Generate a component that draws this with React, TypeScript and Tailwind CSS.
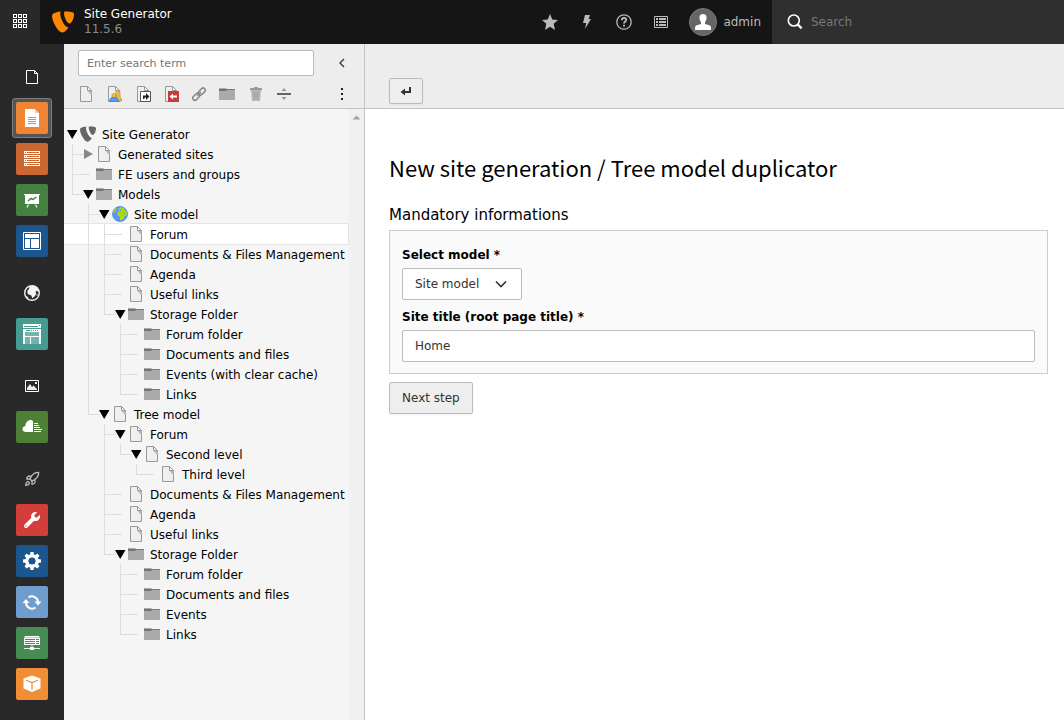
import React from "react";
import { FaWrench } from "react-icons/fa";
import { Rocket } from "lucide-react";

type Kind = "logo" | "page" | "folder" | "globe";

interface TreeNode {
  label: string;
  kind: Kind;
  open?: boolean;
  selected?: boolean;
  children?: TreeNode[];
}

const page = (label: string, extra: Partial<TreeNode> = {}): TreeNode => ({ label, kind: "page", ...extra });
const folder = (label: string, extra: Partial<TreeNode> = {}): TreeNode => ({ label, kind: "folder", ...extra });

const root: TreeNode = {
  label: "Site Generator",
  kind: "logo",
  open: true,
  children: [
    page("Generated sites", { open: false }),
    folder("FE users and groups"),
    folder("Models", {
      open: true,
      children: [
        {
          label: "Site model",
          kind: "globe",
          open: true,
          children: [
            page("Forum", { selected: true }),
            page("Documents & Files Management"),
            page("Agenda"),
            page("Useful links"),
            folder("Storage Folder", {
              open: true,
              children: [
                folder("Forum folder"),
                folder("Documents and files"),
                folder("Events (with clear cache)"),
                folder("Links"),
              ],
            }),
          ],
        },
        page("Tree model", {
          open: true,
          children: [
            page("Forum", {
              open: true,
              children: [page("Second level", { open: true, children: [page("Third level")] })],
            }),
            page("Documents & Files Management"),
            page("Agenda"),
            page("Useful links"),
            folder("Storage Folder", {
              open: true,
              children: [folder("Forum folder"), folder("Documents and files"), folder("Events"), folder("Links")],
            }),
          ],
        }),
      ],
    }),
  ],
};

function Logo({ className }: { className: string }) {
  return (
    <svg viewBox="0 0 22 22" className={className} fill="currentColor" aria-hidden="true">
      <path d="M.6 3C3 1.500 6 .9 9 .6 8.200 1.500 8.100 2.600 8.400 4.500c1 5 4.500 11.700 8.100 12-2 3-4.500 5.100-6.500 5.100C6.500 21.600.1 10.800.1 5.500.1 4.300.2 3.500.6 3z" />
      <path d="M12.500.6c4.500-.1 9.100.4 9.400 1.900.5 3-1.600 9.900-4.400 9.900-2.500 0-5.500-7-5.500-10 0-.9.100-1.500.5-1.800z" />
    </svg>
  );
}

function PageIcon({ children }: { children?: React.ReactNode }) {
  return (
    <svg viewBox="0 0 16 16" className="size-4 shrink-0" aria-hidden="true">
      <path d="M2.5.5h7l4 4v11h-11z" fill="#efefef" stroke="#999" />
      <path d="M9.5 5l4 4.5V4.5z" fill="#bbb" />
      <path d="M9.5.5v4h4z" fill="#fff" stroke="#999" />
      {children}
    </svg>
  );
}

function FolderIcon() {
  return (
    <svg viewBox="0 0 16 16" className="size-4 shrink-0" aria-hidden="true">
      <path d="M0 2h7l1 1h8v11H0z" fill="#aaa" />
      <path d="M0 3h8l8 .2V4H8L7 5H0z" fill="#737373" />
    </svg>
  );
}

function GlobeIcon() {
  return (
    <svg viewBox="0 0 16 16" className="size-4 shrink-0" aria-hidden="true">
      <circle cx="8" cy="8" r="7.500" fill="#59f" stroke="#4a84d8" strokeWidth=".8" />
      <path d="M6.500 2.500L9 1l3.500 1.400-.8 1.300 2.100.7 1.300 2.600-.8 3-2 .2-.6 2.300-2.200 2-1.300-.3-.4-3.600-2-1.200-.6-2.400 1.800-2z" fill="#b0d80e" />
      <path d="M2 4l1.500-1.600L5 2.500 3.400 5.200 2.200 7 .9 7.200z" fill="#b0d80e" />
      <path d="M7 4l2-.8.4 1.200-1.200 1zM11 6l2 1-.4 1.500z" fill="#59f" />
    </svg>
  );
}

function NodeIcon({ kind }: { kind: Kind }) {
  if (kind === "logo") return <Logo className="size-4 shrink-0 text-[#666]" />;
  if (kind === "folder") return <FolderIcon />;
  if (kind === "globe") return <GlobeIcon />;
  return <PageIcon />;
}

/** One 16px column of guide lines: `up` and `down` draw the vertical halves, `branch` turns towards the node. */
function Guide({ up, down, branch }: { up: boolean; down: boolean; branch: boolean }) {
  return (
    <span className="flex h-5 w-4 shrink-0 justify-end">
      <span className="flex w-2 flex-col">
        <span className={`h-[11px] ${up ? "border-l border-[#ddd]" : ""} ${branch ? "border-b border-b-[#ddd]" : ""}`} />
        <span className={`h-[9px] ${down ? "border-l border-[#ddd]" : ""}`} />
      </span>
    </span>
  );
}

function Toggle({ node, depth }: { node: TreeNode; depth: number }) {
  if (node.open === undefined) {
    return (
      <span className="flex h-5 w-4 shrink-0">
        <span className="h-[11px] w-[10px] border-b border-[#ddd]" />
      </span>
    );
  }
  return (
    <button type="button" aria-label={`Toggle ${node.label}`} className="flex h-5 w-4 shrink-0 items-center">
      <svg viewBox="0 0 16 20" className="h-5 w-4">
        {depth > 0 && <path d="M0 10.500h4" stroke="#ddd" />}
        {node.open ? <path d="M3 6h10.500L8.200 15z" fill="#000" /> : <path d="M4 5l9 5-9 5z" fill="#888" />}
      </svg>
    </button>
  );
}

function Branch({ node, depth, trail }: { node: TreeNode; depth: number; trail: boolean[] }) {
  return (
    <li>
      <div
        className={`flex items-center ${
          node.selected ? "relative -my-px h-[22px] border-y border-r border-[#e5e5e5] bg-white" : "h-5"
        }`}
      >
        {trail.map((more, i) => {
          const own = i === trail.length - 1;
          return <Guide key={i} up={own || more} down={more} branch={own} />;
        })}
        <Toggle node={node} depth={depth} />
        <NodeIcon kind={node.kind} />
        <a href="#" className="pt-[2px] pl-[6px] text-xs leading-4 whitespace-nowrap text-black">
          {node.label}
        </a>
      </div>
      {node.children && (
        <ul>
          {node.children.map((child, i) => (
            <Branch
              key={i}
              node={child}
              depth={depth + 1}
              trail={[...trail, i < node.children!.length - 1]}
            />
          ))}
        </ul>
      )}
    </li>
  );
}

interface Module {
  name: string;
  bg?: string;
  active?: boolean;
  art: React.ReactNode;
}

const moduleGroups: Module[][] = [
  [
    {
      name: "Web",
      art: <path d="M10.500 9.500h8l3 3v10h-11zM18.500 9.500v3h3" fill="none" stroke="#fff" />,
    },
    {
      name: "Page",
      bg: "bg-[#ef8535]",
      active: true,
      art: (
        <>
          <path d="M9 7h10v4h4v14H9z" fill="#fff" />
          <path d="M19 7l4 4h-4z" fill="#f9cba6" />
          <path d="M12 15.500h8M12 17.500h8M12 19.500h8M12 21.500h8" stroke="#ef8535" />
        </>
      ),
    },
    {
      name: "List",
      bg: "bg-[#cc6633]",
      art: (
        <>
          <path d="M8 8h16v3H8zM8 12h16v3H8zM8 16h16v3H8zM8 20h16v3H8z" fill="#fff" />
          <path d="M11 9.500h12M11 13.500h12M11 17.500h12M11 21.500h12M9 9.500h1M9 13.500h1M9 17.500h1M9 21.500h1" stroke="#cc6633" />
        </>
      ),
    },
    {
      name: "View",
      bg: "bg-[#448040]",
      art: (
        <>
          <path d="M8 10h16v1h-1v9H9v-9H8z" fill="#fff" />
          <path d="M12.500 20.500L11 23.500M19.500 20.500l1.500 3" stroke="#cfe0cd" strokeWidth="1.500" />
          <path d="M12 17l3-2.500 2 1 3.500-2.500" stroke="#448040" strokeWidth="1.500" fill="none" />
        </>
      ),
    },
    {
      name: "Layout",
      bg: "bg-[#1b568f]",
      art: (
        <>
          <path d="M7.500 7.500h17v17h-17z" fill="none" stroke="#fff" />
          <path d="M9 9h14v4H9zM9 14h5v9H9zM15 14h8v9h-8z" fill="#fff" />
        </>
      ),
    },
  ],
  [
    {
      name: "Site",
      art: (
        <>
          <circle cx="16" cy="16" r="7.300" fill="#292929" stroke="#eee" strokeWidth="1.400" />
          <path d="M13.500 9l4-.5 4 2 1.500 3.500-1 1-1-1.500-1.500 1.500.8 1.500-1.500 2.800-2.500 2-1-2.800-3.600-1.500-.4-3 1.700-2z" fill="#f4f4f4" />
          <path d="M9 18l3 2 1 3-3-1.500zM20 18l2-1-.5 2z" fill="#ddd" />
        </>
      ),
    },
    {
      name: "Template",
      bg: "bg-[#479c92]",
      art: (
        <>
          <path d="M7 6h18v4H7zM8 11h16v3H8z" fill="#fff" />
          <path d="M8 8.500h14M23 7.500h1" stroke="#479c92" />
          <path d="M10 12.500h4M15 12.500h1M17 12.500h1M19 12.500h1M21 12.500h1" stroke="#479c92" />
          <path d="M7 11h2v15H7zM23 11h2v15h-2z" fill="#fff" />
          <path d="M9 14h14v4H9zM9 19h5v7H9zM15 19h8v7h-8z" fill="#73b5ad" />
          <path d="M9 18.500h14M14.500 19v7" stroke="#fff" />
        </>
      ),
    },
  ],
  [
    {
      name: "File",
      art: (
        <>
          <path d="M9.500 10.500h13v11h-13z" fill="none" stroke="#fff" />
          <path d="M11 20v-2l3-4 2 3 1.500-1.500L21 19v1zM19 12h2v2h-2z" fill="#eee" />
        </>
      ),
    },
    {
      name: "Filelist",
      bg: "bg-[#4d7f37]",
      art: (
        <>
          <path d="M17 21H9.500C5.500 20.500 5.500 15.500 9.400 15c0-6 7-7.500 7.600-4.500z" fill="#fff" />
          <path d="M18 12.500h4M18 14.500h5M18 16.500h6M18 18.500h8M18 20.500h7" stroke="#fff" />
        </>
      ),
    },
  ],
  [
    { name: "Admin Tools", art: null },
    { name: "Maintenance", bg: "bg-[#d23f3a]", art: null },
    {
      name: "Settings",
      bg: "bg-[#1b568f]",
      art: (
        <g fill="#fff">
          <circle cx="16" cy="16" r="5.200" fill="none" stroke="#fff" strokeWidth="3.200" />
          {[0, 45, 90, 135, 180, 225, 270, 315].map((a) => (
            <path key={a} d="M14 10l.5-3h3l.5 3z" transform={`rotate(${a} 16 16)`} />
          ))}
        </g>
      ),
    },
    {
      name: "Upgrade",
      bg: "bg-[#6f9dcd]",
      art: (
        <>
          <path d="M12.500 11.500a6 6 0 0 1 9.500 5M19.500 21.500a6 6 0 0 1-9.500-5" fill="none" stroke="#fff" strokeWidth="2" />
          <path d="M18.500 15.500h7l-3.500 4zM6.500 17h7L10 13z" fill="#fff" />
        </>
      ),
    },
    {
      name: "Environment",
      bg: "bg-[#448c52]",
      art: (
        <>
          <path d="M9 9h14l1 2v7H8v-7z" fill="#fff" />
          <path d="M8 10.500h16" stroke="#b5d3ba" />
          <path d="M9 12.500h10M9 14.500h10M9 16.500h10M20 12.500h3M20 14.500h3M20 16.500h3" stroke="#448c52" />
          <path d="M8 21.500h16M16 18v4" stroke="#e3efe5" />
          <path d="M14 20h4v3h-4z" fill="#fff" />
        </>
      ),
    },
    {
      name: "Extensions",
      bg: "bg-[#f08d35]",
      art: (
        <>
          <path d="M16 7.500l8.500 3v10L16 24l-8.500-3.500v-10z" fill="#fff" />
          <path d="M10 12.200l6 2.300 6-2.300M16 14.500V22" fill="none" stroke="#f08d35" strokeWidth="1.200" />
        </>
      ),
    },
  ],
];

function ModuleButton({ m }: { m: Module }) {
  return (
    <button
      type="button"
      aria-label={m.name}
      className={`flex size-10 items-center justify-center rounded-[3px] ${
        m.active ? "border border-[#7d7d7d] bg-[#545454]" : ""
      }`}
    >
      <span className={`flex size-8 shrink-0 items-center justify-center rounded-[2px] ${m.bg ?? ""}`}>
        {m.name === "Admin Tools" ? (
          <Rocket size={16} strokeWidth={2} className="text-[#bbb]" />
        ) : m.name === "Maintenance" ? (
          <FaWrench size={16} className="text-white" />
        ) : (
          <svg viewBox="0 0 32 32" className="size-8" aria-hidden="true">
            {m.art}
          </svg>
        )}
      </span>
    </button>
  );
}

function TopBar() {
  return (
    <header className="flex h-11 shrink-0 bg-[#151515]">
      <button type="button" aria-label="Toggle modules" className="flex w-10 items-center justify-center bg-[#292929] pb-[2px]">
        <svg viewBox="0 0 14 14" className="size-[14px]" fill="none" stroke="#fff" aria-hidden="true">
          {[0.5, 5.5, 10.5].map((y) => [0.5, 5.5, 10.5].map((x) => <rect key={`${x}-${y}`} x={x} y={y} width="3" height="3" />))}
        </svg>
      </button>
      <a href="#" className="flex items-center gap-[10px] pl-3">
        <Logo className="size-[22px] text-[#ff8700]" />
        <span className="flex flex-col text-xs leading-[15px] text-white">
          <span>Site Generator</span>
          <span className="text-[#8c8c8c]">11.5.6</span>
        </span>
      </a>
      <nav className="ml-auto flex">
        <button type="button" aria-label="Bookmarks" className="flex w-[37px] items-center justify-center">
          <svg viewBox="0 0 16 16" className="size-4" aria-hidden="true">
            <path d="M8 0l2.300 5.400 5.700.5-4.300 3.900L13 16l-5-3.200L3 16l1.300-6.200L0 5.900l5.700-.5z" fill="#bbb" />
          </svg>
        </button>
        <button type="button" aria-label="Flush caches" className="flex w-[37px] items-center justify-center">
          <svg viewBox="0 0 16 16" className="size-4" aria-hidden="true">
            <path d="M6 1h5L9.500 5H12L6 15l1.200-6H4z" fill="#bbb" />
          </svg>
        </button>
        <button type="button" aria-label="Help" className="flex w-[37px] items-center justify-center">
          <svg viewBox="0 0 16 16" className="size-4" fill="none" stroke="#bbb" aria-hidden="true">
            <circle cx="8" cy="8" r="7.200" strokeWidth="1.300" />
            <path d="M5.800 6.300c0-3.200 4.700-2.900 4.500-.3C10.200 7.500 8 7.600 8 9.600M8 10.700v1.800" strokeWidth="1.800" />
          </svg>
        </button>
        <button type="button" aria-label="System information" className="flex w-[37px] items-center justify-center">
          <svg viewBox="0 0 16 16" className="size-4" fill="none" stroke="#bbb" aria-hidden="true">
            <path d="M1.500 2.500h13v11h-13z" />
            <path d="M3 5h2M6 5h7M3 8h2M6 8h7M3 11h2M6 11h7" strokeWidth="2" />
          </svg>
        </button>
        <button type="button" className="flex items-center gap-[6px] pr-[11px] pl-[10px] text-xs text-[#bbb]">
          <svg viewBox="0 0 28 28" className="size-7" aria-hidden="true">
            <circle cx="14" cy="14" r="13.500" fill="#666" stroke="#7c7c7c" />
            <path d="M10.500 9c0-4 7-4 7 0 .2 2.500-.5 4-1.500 5v2l5 1.500c1 .5 1 2.500 1 4.500H6c0-2 0-4 1-4.500l5-1.500v-2c-1-1-1.700-2.500-1.500-5z" fill="#fff" />
          </svg>
          admin
        </button>
      </nav>
      <label className="flex w-[292px] items-center bg-[#2f2f2f] pl-[15px]">
        <svg viewBox="0 0 16 16" className="size-4 shrink-0" fill="none" stroke="#fff" aria-hidden="true">
          <circle cx="6.800" cy="6.500" r="5.500" strokeWidth="1.600" />
          <path d="M10.600 10.400l4 4" strokeWidth="2.200" />
        </svg>
        <input
          type="search"
          aria-label="Search"
          placeholder="Search"
          className="w-full min-w-0 bg-transparent pl-2 text-xs text-white outline-none placeholder:text-[#777]"
        />
      </label>
    </header>
  );
}

const tools: { name: string; art: React.ReactNode }[] = [
  { name: "New page", art: <PageIcon /> },
  {
    name: "New backend user section",
    art: (
      <PageIcon>
        <path d="M10 6c.2-2 4-2 4 0v5l1.500 2v2h-5z" fill="#f2bd43" stroke="#aa8033" strokeWidth=".6" />
        <path d="M6 9c.2-2 4-2 4 0v3H6z" fill="#f2bd43" stroke="#aa8033" strokeWidth=".6" />
        <path d="M3.500 15.500c0-3 1.500-4 3-4H9c2 0 3.500 1 3.500 4z" fill="#59f" stroke="#47a" strokeWidth=".6" />
      </PageIcon>
    ),
  },
  {
    name: "New shortcut",
    art: (
      <PageIcon>
        <path d="M5.500 5.500h10v10h-10z" fill="#fff" stroke="#555" />
        <path d="M8 13v-3.500h3V7l3.500 3.500L11 14v-2.500H9.500V13z" fill="#222" />
      </PageIcon>
    ),
  },
  {
    name: "New mount point",
    art: (
      <PageIcon>
        <path d="M5 5h11v11H5z" fill="#c83c3c" />
        <path d="M6.500 10.500L10 7.500v2h4v2h-4v2z" fill="#fff" />
      </PageIcon>
    ),
  },
  {
    name: "New link",
    art: (
      <svg viewBox="0 0 16 16" className="size-4" fill="none" stroke="#858585" strokeWidth="1.500" aria-hidden="true">
        <rect x="6.800" y="3.300" width="8" height="4.400" rx="2.200" transform="rotate(-45 10.800 5.500)" />
        <rect x="1.200" y="8.600" width="8" height="4.400" rx="2.200" transform="rotate(-45 5.200 10.800)" />
        <path d="M6 10l4-4" />
      </svg>
    ),
  },
  { name: "New folder", art: <FolderIcon /> },
  {
    name: "New recycler",
    art: (
      <svg viewBox="0 0 16 16" className="size-4" aria-hidden="true">
        <path d="M2 2h4V1h4v1h4v2H2z" fill="#999" />
        <path d="M3 4h10l-1 11H4z" fill="#b5b5b5" />
        <path d="M6 6l.4 7M8 6v7M10 6l-.4 7" stroke="#a5a5a5" />
      </svg>
    ),
  },
  {
    name: "New divider",
    art: (
      <svg viewBox="0 0 16 16" className="size-4" aria-hidden="true">
        <path d="M1 7h14v2H1z" fill="#666" />
        <path d="M5.500 5L8 2l2.500 3zM5.500 11L8 14l2.500-3z" fill="#999" />
      </svg>
    ),
  },
];

function TreePanel() {
  return (
    <aside className="flex w-[301px] shrink-0 flex-col border-r border-[#c3c3c3] bg-[#f5f5f5]">
      <div className="flex h-[65px] shrink-0 flex-col border-b border-[#c3c3c3] bg-[#ededed] pt-[6px]">
        <div className="flex items-center pr-[14px] pl-[14px]">
          <input
            type="search"
            aria-label="Enter search term"
            placeholder="Enter search term"
            className="h-[26px] w-[236px] rounded-[2px] border border-[#bbb] bg-white px-2 text-[11px] outline-none placeholder:text-[#757575]"
          />
          <button type="button" aria-label="Collapse tree" className="ml-auto flex size-4 items-center justify-center">
            <svg viewBox="0 0 16 16" className="size-4" fill="none" stroke="#333" strokeWidth="1.300" aria-hidden="true">
              <path d="M10 4L6 8l4 4" />
            </svg>
          </button>
        </div>
        <div className="mt-[10px] flex items-center pr-[14px] pl-[14px]">
          <div className="flex w-[214px] justify-between">
            {tools.map((t) => (
              <button key={t.name} type="button" aria-label={t.name}>
                {t.art}
              </button>
            ))}
          </div>
          <button type="button" aria-label="More" className="ml-auto">
            <svg viewBox="0 0 16 16" className="size-4" fill="#222" aria-hidden="true">
              <path d="M7 2h2v2H7zM7 7h2v2H7zM7 12h2v2H7z" />
            </svg>
          </button>
        </div>
      </div>
      <div className="flex grow">
        <ul className="min-w-0 grow overflow-hidden pt-[15px]">
          <Branch node={root} depth={0} trail={[]} />
        </ul>
        <div className="w-[15px] shrink-0 bg-[#f0f0f0] pt-[5px]">
          <svg viewBox="0 0 15 7" className="h-[7px] w-[15px]" aria-hidden="true">
            <path d="M3.500 5.500h8l-4-4z" fill="#a3a3a3" />
          </svg>
        </div>
      </div>
    </aside>
  );
}

function Content() {
  return (
    <main className="flex min-w-0 grow flex-col bg-white">
      <div className="flex h-[65px] shrink-0 items-end border-b border-[#c3c3c3] bg-[#ededed] px-6 pb-1">
        <button
          type="button"
          aria-label="Go back"
          className="flex h-[26px] w-[34px] items-center justify-center rounded-[2px] border border-[#bbb] bg-[#eee] shadow-xs"
        >
          <svg viewBox="0 0 16 16" className="size-4" aria-hidden="true">
            <path d="M11 4h2v6H7v2.500L2.500 9 7 5.500V8h4z" fill="#333" />
          </svg>
        </button>
      </div>
      <div className="pt-[42px] pr-4 pl-6">
        <h1 className="font-['Noto_Sans_CJK_SC',sans-serif] text-[22px] leading-8 text-black">
          New site generation / Tree model duplicator
        </h1>
        <form onSubmit={(e) => e.preventDefault()}>
          <h2 className="mt-[22px] text-[15px] leading-5 text-black">Mandatory informations</h2>
          <fieldset className="mt-[5px] flex flex-col items-start border border-[#ccc] bg-[#fafafa] px-3 pt-[15px] pb-[11px]">
            <label htmlFor="model" className="text-xs leading-[18px] font-bold text-black">
              Select model *
            </label>
            <div className="relative mt-1">
              <select
                id="model"
                defaultValue="Site model"
                className="h-8 w-[120px] appearance-none rounded-[2px] border border-[#bbb] bg-[#fefefe] px-3 text-xs text-[#333]"
              >
                <option>Site model</option>
                <option>Tree model</option>
              </select>
              <svg
                viewBox="0 0 16 16"
                className="pointer-events-none absolute top-2 right-[13px] size-4"
                fill="none"
                stroke="#333"
                strokeWidth="1.600"
                aria-hidden="true"
              >
                <path d="M3 5.500l5 5 5-5" />
              </svg>
            </div>
            <label htmlFor="title" className="mt-2 text-xs leading-[18px] font-bold text-black">
              Site title (root page title) *
            </label>
            <input
              id="title"
              type="text"
              defaultValue="Home"
              className="mt-1 h-8 w-full rounded-[2px] border border-[#bbb] bg-[#fefefe] px-3 text-xs text-[#333]"
            />
          </fieldset>
          <button
            type="submit"
            className="mt-2 h-8 rounded-[2px] border border-[#bbb] bg-[#eee] px-3 text-xs text-[#333] shadow-xs"
          >
            Next step
          </button>
        </form>
      </div>
    </main>
  );
}

export default function App() {
  return (
    <div className="flex min-h-screen flex-col font-['DejaVu_Sans',sans-serif]">
      <TopBar />
      <div className="flex grow">
        <nav className="flex w-16 shrink-0 flex-col items-center gap-3 bg-[#292929] pt-[13px]">
          {moduleGroups.map((group, i) => (
            <div key={i} className="flex flex-col gap-px">
              {group.map((m) => (
                <ModuleButton key={m.name} m={m} />
              ))}
            </div>
          ))}
        </nav>
        <TreePanel />
        <Content />
      </div>
    </div>
  );
}
